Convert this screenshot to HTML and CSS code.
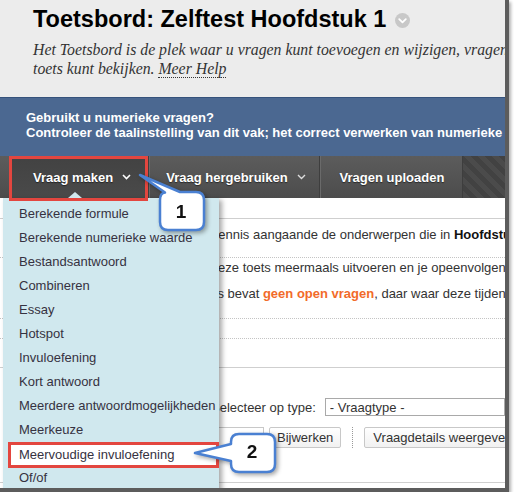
FILE: index.html
```html
<!DOCTYPE html>
<html lang="nl">
<head>
    <meta charset="UTF-8">
    <meta name="viewport" content="width=device-width, initial-scale=1.0">
    <title>Toetsbord: Zelftest Hoofdstuk 1</title>
    <link rel="stylesheet" href="styles.css">
</head>
<body>
<div class="frame">
    <div class="page-header">
        <div class="title-row">
            <h1>Toetsbord: Zelftest Hoofdstuk 1</h1>
            <span class="title-menu">
                <svg width="15" height="15" viewBox="0 0 15 15"><path d="M4.2 6.2 L7.5 9.4 L10.8 6.2" fill="none" stroke="#fff" stroke-width="1.8" stroke-linecap="round" stroke-linejoin="round"/></svg>
            </span>
        </div>
        <p class="page-desc">Het Toetsbord is de plek waar u vragen kunt toevoegen en wijzigen, vragen opnieuw kunt gebruiken en de structuur van de<br>toets kunt bekijken. <a href="#" class="help-link">Meer Help</a></p>
    </div>

    <div class="notice">
        <p>Gebruikt u numerieke vragen?</p>
        <p>Controleer de taalinstelling van dit vak; het correct verwerken van numerieke antwoorden is afhankelijk van deze instelling.</p>
    </div>

    <div class="action-bar">
        <a href="#" class="action active">Vraag maken
            <svg class="chev" width="9" height="6" viewBox="0 0 9 6"><path d="M1 1 L4.5 4.5 L8 1" fill="none" stroke="#fff" stroke-width="1.6"/></svg>
        </a>
        <a href="#" class="action wide">Vraag hergebruiken
            <svg class="chev" width="9" height="6" viewBox="0 0 9 6"><path d="M1 1 L4.5 4.5 L8 1" fill="none" stroke="#ddd" stroke-width="1.4"/></svg>
        </a>
        <a href="#" class="action plain">Vragen uploaden</a>
        <div class="action-fill"></div>
    </div>

    <div class="content">
        <div class="content-top"></div>
        <p class="info-row first">Met deze zelftest toets je jouw kennis aangaande de onderwerpen die in <strong>Hoofdstuk 1</strong> aan bod kwamen.</p>
        <div class="info-row">
            <p>Als student in dit vak kan je al deze toets meermaals uitvoeren en je opeenvolgende resultaten vergelijken.</p>
            <p class="next">Let op: deze formatieve zelftoets bevat <strong class="warn">geen open vragen</strong>, daar waar deze tijdens het examen wel voorkomen.</p>
        </div>
        <div class="info-row empty"></div>
        <div class="spacer"></div>

        <div class="filter-row">
            <label for="type">Selecteer op type:</label>
            <select id="type" class="type-select"><option>- Vraagtype -</option></select>
        </div>
        <div class="button-row">
            <input type="text" class="search">
            <button>Bijwerken</button>
            <span class="divider"></span>
            <button class="details">Vraagdetails weergeven</button>
        </div>
        <div class="bottom-line"></div>

        <ul class="menu">
            <li>Berekende formule</li>
            <li>Berekende numerieke waarde</li>
            <li>Bestandsantwoord</li>
            <li>Combineren</li>
            <li>Essay</li>
            <li>Hotspot</li>
            <li>Invuloefening</li>
            <li>Kort antwoord</li>
            <li>Meerdere antwoordmogelijkheden</li>
            <li>Meerkeuze</li>
            <li class="marked">Meervoudige invuloefening</li>
            <li>Of/of</li>
        </ul>
    </div>

    <!-- annotations -->
    <div class="mark-box"></div>
    <svg class="callouts" width="505" height="488" viewBox="0 0 505 488">
        <path class="bubble" d="M140 175 L180 192 H196 Q204 192 204 200 V222 Q204 230 196 230 H168 Q160 230 160 222 V200 Q160 193 165 192.5 Z"/>
        <text x="181" y="218" text-anchor="middle">1</text>
        <path class="bubble" d="M195 453 L231 444 V442 Q231 434 239 434 H267 Q275 434 275 442 V464 Q275 472 267 472 H239 Q231 472 231 464 V461 Z"/>
        <text x="252" y="458" text-anchor="middle">2</text>
    </svg>
</div>
</body>
</html>
```

FILE: styles.css
```css
body {
    margin: 0;
    background: #fff;
    font-family: "Liberation Sans", Arial, sans-serif;
    font-size: 13px;
    color: #333;
}
p {
    margin: 0;
}
.frame {
    position: relative;
    width: 505px;
    height: 488px;
    overflow: hidden;
    border-right: 4px solid #5c5c5c;
    border-bottom: 4px solid #5c5c5c;
    box-shadow: 2px 2px 3px rgba(0, 0, 0, 0.3);
}

/* header */
.page-header {
    background: #ececec;
    padding: 5px 0 19px 33px;
}
.title-row {
    display: flex;
    align-items: center;
}
.title-row h1 {
    margin: 0;
    font-size: 23.5px;
    line-height: 28px;
    font-weight: bold;
    color: #000;
    white-space: nowrap;
}
.title-menu {
    display: flex;
    width: 15px;
    height: 15px;
    margin: 3px 0 0 9px;
    border-radius: 50%;
    background: #c8c8c8;
}
.page-desc {
    margin-top: 7px;
    font-family: "Liberation Serif", "Times New Roman", serif;
    font-style: italic;
    font-size: 15.8px;
    line-height: 19px;
    color: #333;
    white-space: nowrap;
}
.help-link {
    color: #333;
    text-decoration: none;
    border-bottom: 1px dotted #333;
}

/* notice */
.notice {
    background: #4b6891;
    border-top: 1px solid #35527b;
    padding: 12px 0 16px 26px;
    color: #fff;
    font-weight: bold;
    font-size: 13px;
    line-height: 15px;
    white-space: nowrap;
}

/* action bar */
.action-bar {
    display: flex;
    height: 42px;
    padding-left: 10px;
    background: linear-gradient(#5c5c5c, #4c4c4c);
}
.action {
    display: flex;
    align-items: center;
    padding: 0 14px 0 17px;
    color: #fff;
    font-weight: bold;
    text-decoration: none;
    white-space: nowrap;
    text-shadow: 0 1px 1px rgba(0, 0, 0, 0.5);
    box-shadow: inset 1px 0 0 #6a6a6a, inset -1px 0 0 #3e3e3e;
}
.action.active {
    padding: 0 18px 0 23px;
    background: linear-gradient(#424242, #4a4a4a);
}
.action.plain {
    padding: 0 19px 0 20px;
}
.chev {
    margin-left: 9px;
}
.action-fill {
    flex: 1;
    background: repeating-linear-gradient(45deg, #4b4b4b 0 5px, #424242 5px 10px);
}

/* content */
.content {
    position: relative;
    height: 290px;
}
.content-top {
    height: 20px;
    border-bottom: 1px solid #cfcfcf;
}
.info-row {
    padding: 2px 0 16px 36px;
    line-height: 16px;
    white-space: nowrap;
    overflow: hidden;
    border-bottom: 1px dotted #c4c4c4;
}
.info-row.first {
    padding: 8px 0 14px 34px;
}
.info-row .next {
    margin-top: 10px;
}
.info-row.empty {
    height: 19px;
    padding: 0;
}
.info-row strong {
    color: #111;
}
.info-row .warn {
    color: #f26b2a;
}
.spacer {
    height: 28px;
    border-bottom: 1px solid #cfcfcf;
}
.filter-row {
    display: flex;
    align-items: center;
    padding: 30px 0 0 211px;
    white-space: nowrap;
}
.type-select {
    appearance: none;
    width: 220px;
    height: 18px;
    margin-left: 9px;
    padding: 0 4px;
    border: 1px solid #a9a9a9;
    background: #fff;
    font-family: inherit;
    font-size: 13px;
    color: #333;
}
.button-row {
    display: flex;
    align-items: stretch;
    height: 21px;
    margin-top: 11px;
    padding-left: 204px;
    white-space: nowrap;
}
.search {
    flex: none;
    width: 60px;
    margin: 0 5px 0 0;
    padding: 0;
    border: 1px solid #c8c8c8;
    box-sizing: border-box;
}
.button-row button {
    flex: none;
    padding: 0 7px;
    border: 1px solid #c8c8c8;
    border-radius: 2px;
    background: linear-gradient(#fff, #f1f1f1);
    font-family: inherit;
    font-size: 13px;
    color: #333;
}
.button-row .details {
    padding: 0 8px;
}
.divider {
    flex: none;
    margin: 0 11px;
    border-left: 1px dotted #999;
}
.bottom-line {
    height: 34px;
    border-bottom: 1px solid #cfcfcf;
}

/* dropdown menu */
.menu {
    position: absolute;
    top: 0;
    left: 3px;
    width: 216px;
    height: 300px;
    margin: 0;
    padding: 4px 0 0;
    list-style: none;
    background: #d0e8ee;
    box-shadow: 3px 2px 5px rgba(0, 0, 0, 0.35);
}
.menu::before {
    content: "";
    position: absolute;
    top: -6px;
    left: 65px;
    border-left: 7px solid transparent;
    border-right: 7px solid transparent;
    border-bottom: 6px solid #d0e8ee;
}
.menu li {
    padding-left: 16px;
    line-height: 24px;
    color: #363241;
    white-space: nowrap;
}
.menu li.marked {
    margin: 0 0 -2px 5px;
    padding-left: 8px;
    line-height: 20px;
    background: #fff;
    border: 3px solid #e3463f;
}

/* annotations */
.mark-box {
    position: absolute;
    top: 156px;
    left: 9px;
    width: 139px;
    height: 45px;
    box-sizing: border-box;
    border: 3px solid #e3463f;
}
.callouts {
    position: absolute;
    top: 0;
    left: 0;
    pointer-events: none;
    filter: drop-shadow(2px 2px 2px rgba(0, 0, 0, 0.35));
}
.bubble {
    fill: #fff;
    stroke: #4a80d2;
    stroke-width: 2.5;
    stroke-linejoin: round;
}
.callouts text {
    font-family: "Liberation Sans", Arial, sans-serif;
    font-weight: bold;
    font-size: 19px;
    fill: #111;
}
```
